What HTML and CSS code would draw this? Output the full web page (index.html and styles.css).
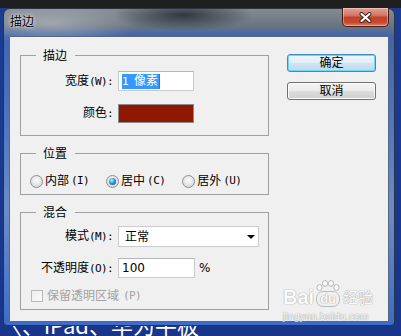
FILE: index.html
```html
<!DOCTYPE html>
<html lang="zh-CN">
<head>
  <meta charset="UTF-8">
  <title>描边</title>
  <link rel="stylesheet" href="styles.css">
</head>
<body>
  <div class="window">
    <div class="titlebar">
      <span class="title">描边</span>
      <button class="close" aria-label="关闭">
        <svg width="13" height="11" viewBox="0 0 13 11">
          <path d="M2.5 2 L10.5 9 M10.5 2 L2.5 9" stroke="#3b1812" stroke-width="4" stroke-linecap="round"/>
          <path d="M2.5 2 L10.5 9 M10.5 2 L2.5 9" stroke="#fff" stroke-width="2.2" stroke-linecap="round"/>
        </svg>
      </button>
    </div>

    <div class="client">
      <div class="groups">
        <fieldset class="group group-stroke">
          <legend>描边</legend>
          <div class="fields">
            <label class="label">宽度<span class="en">(W):</span></label>
            <span class="field"><span class="sel"><span class="en">1 </span>像素</span></span>
            <label class="label">颜色<span class="en">:</span></label>
            <span class="swatch"></span>
          </div>
        </fieldset>

        <fieldset class="group group-position">
          <legend>位置</legend>
          <div class="radios">
            <span class="radio"><span class="radio-dot"></span>内部<span class="en">(I)</span></span>
            <span class="radio checked"><span class="radio-dot"></span>居中<span class="en">(C)</span></span>
            <span class="radio"><span class="radio-dot"></span>居外<span class="en">(U)</span></span>
          </div>
        </fieldset>

        <fieldset class="group group-blend">
          <legend>混合</legend>
          <div class="fields fields-blend">
            <label class="label">模式<span class="en">(M):</span></label>
            <span class="select"><span class="select-value">正常</span><span class="select-arrow"></span></span>
            <label class="label">不透明度<span class="en">(O):</span></label>
            <span class="with-unit"><span class="field field-short"><span class="num">100</span></span><span class="num">%</span></span>
          </div>
          <div class="check disabled"><span class="check-box"></span>保留透明区域<span class="en">(P)</span></div>
        </fieldset>
      </div>

      <div class="actions">
        <button class="btn btn-default">确定</button>
        <button class="btn">取消</button>
      </div>
    </div>
  </div>

  <div class="backdrop"><span>〈、iPad、华为平板</span></div>

  <div class="watermark">
    <div class="wm-logo">
      <span class="wm-bai">Bai</span>
      <span class="paw">
        <svg width="24" height="11" viewBox="0 0 24 11">
          <ellipse cx="3.5" cy="7.5" rx="2.6" ry="3" fill="#fff" stroke="#aaa"/>
          <ellipse cx="9" cy="3.5" rx="2.6" ry="3" fill="#fff" stroke="#aaa"/>
          <ellipse cx="15" cy="3.5" rx="2.6" ry="3" fill="#fff" stroke="#aaa"/>
          <ellipse cx="20.5" cy="7.5" rx="2.6" ry="3" fill="#fff" stroke="#aaa"/>
        </svg>
        <span class="du">du</span>
      </span>
      <span class="wm-cn">经验</span>
    </div>
    <div class="wm-url">jingyan.baidu.com</div>
  </div>
</body>
</html>
```

FILE: styles.css
```css
* {
  box-sizing: border-box;
}

body {
  margin: 0;
  width: 401px;
  height: 336px;
  overflow: hidden;
  position: relative;
  padding-top: 8px;
  background: linear-gradient(to bottom, #1f1f1f 0, #1f1f1f 8px, #1b3c92 8px, #18358a 100%);
  font-family: "Liberation Sans", "Noto Sans CJK SC", sans-serif;
  font-size: 12px;
  color: #000;
}

/* half-width latin, like the dialog's bitmap font */
.en {
  font-family: "DejaVu Sans Mono", monospace;
  font-size: 11px;
  letter-spacing: -0.6px;
}

.num {
  font-family: "DejaVu Sans", sans-serif;
  font-size: 12px;
}

/* window frame */
.window {
  margin-left: 3px;
  width: 392px;
  height: 318px;
  border: 1px solid #2b3442;
  border-radius: 7px 7px 4px 4px;
  padding: 0 5px 3px;
  background:
    radial-gradient(ellipse 70px 16px at 46% 6px, rgba(25, 30, 38, .75), rgba(25, 30, 38, 0)),
    radial-gradient(ellipse 90px 22px at 12% 14px, rgba(200, 205, 210, .55), rgba(200, 205, 210, 0)),
    linear-gradient(to bottom, #838b93 0, #6d767f 16px, #3f65ae 27px, #5077c0 120px, #6d8cc6 200px, #3d6cc8 100%);
}

.titlebar {
  display: flex;
  height: 27px;
}

.title {
  padding: 4px 0 0 1px;
  line-height: 16px;
  font-family: "Noto Sans CJK SC", sans-serif;
  text-shadow: 0 0 5px rgba(255, 255, 255, .9), 0 0 2px rgba(255, 255, 255, .8);
}

.close {
  margin-left: auto;
  margin-top: -1px;
  width: 47px;
  height: 19px;
  padding: 0;
  display: flex;
  align-items: center;
  justify-content: center;
  border: 1px solid #4a1c18;
  border-top: none;
  border-radius: 0 0 5px 5px;
  background: linear-gradient(to bottom, #e3a191 0, #d27a69 40%, #c2412a 52%, #c54a32 80%, #dd835f 100%);
  box-shadow: inset 0 0 0 1px rgba(255, 255, 255, .35);
}

/* dialog body */
.client {
  display: flex;
  gap: 18px;
  height: 286px;
  padding: 10px 0 0 10px;
  background: #f0f0f0;
  border: 1px solid #59687d;
}

.groups {
  width: 249px;
  display: flex;
  flex-direction: column;
  gap: 9px;
}

.group {
  margin: 0;
  min-width: 0;
  padding: 8px 0 12px;
  border: 1px solid #a0a0a0;
}

.group legend {
  margin-left: 15px;
  padding: 0 8px 0 7px;
  line-height: 16px;
  font-family: "Noto Sans CJK SC", sans-serif;
}

.group-position {
  padding: 10px 0 3px;
}

.group-blend {
  padding: 6px 0 6px;
}

.fields {
  display: grid;
  grid-template-columns: 92px auto;
  column-gap: 5px;
  row-gap: 13px;
  align-items: center;
  justify-items: start;
}

.fields-blend {
  row-gap: 11px;
}

.label {
  justify-self: end;
  line-height: 16px;
}

.field {
  display: flex;
  align-items: center;
  width: 76px;
  height: 20px;
  padding: 0 0 0 3px;
  background: #fff;
  border: 1px solid #c9cbcf;
  border-top-color: #b4b6bb;
}

.field-short {
  width: 77px;
}

.sel {
  background: #3399ff;
  color: #fff;
  line-height: 15px;
  padding-right: 1px;
  border-right: 1px solid #c05020;
}

.swatch {
  width: 76px;
  height: 19px;
  background: #8f1900;
  border: 1px solid #8c8c8c;
}

.radios {
  display: flex;
  align-items: center;
  gap: 17px;
  height: 20px;
  padding-left: 9px;
}

.radio {
  display: flex;
  align-items: center;
  gap: 2px;
  line-height: 16px;
}

.radio-dot {
  display: flex;
  align-items: center;
  justify-content: center;
  width: 13px;
  height: 13px;
  border-radius: 50%;
  border: 1px solid #8d8f90;
  background: radial-gradient(circle at 50% 40%, #fdfdfd 0, #e4e4e4 55%, #c9c9c9 100%);
}

.radio.checked .radio-dot::after {
  content: "";
  width: 7px;
  height: 7px;
  border-radius: 50%;
  background: radial-gradient(circle at 40% 35%, #c4f2ff 0, #2b9bd8 45%, #0b3f72 100%);
}

.select {
  display: flex;
  align-items: center;
  width: 141px;
  height: 21px;
  padding: 0 3px 0 6px;
  background: #fff;
  border: 1px solid #c9cbcf;
}

.select-value {
  flex: 1;
  line-height: 16px;
}

.select-arrow {
  width: 0;
  height: 0;
  border-left: 4px solid transparent;
  border-right: 4px solid transparent;
  border-top: 4px solid #000;
}

.with-unit {
  display: flex;
  align-items: center;
  gap: 4px;
}

.check {
  display: flex;
  align-items: center;
  gap: 4px;
  height: 15px;
  margin-top: 10px;
  padding-left: 10px;
  line-height: 16px;
}

.check.disabled {
  color: #a2a2a2;
}

.check-box {
  width: 12px;
  height: 12px;
  border: 1px solid #b9b9b9;
  background: linear-gradient(135deg, #ececec, #fbfbfb);
}

/* buttons */
.actions {
  display: flex;
  flex-direction: column;
  gap: 10px;
  padding-top: 7px;
}

.btn {
  width: 89px;
  height: 18px;
  padding: 0;
  font-family: "Liberation Sans", "Noto Sans CJK SC", sans-serif;
  font-size: 12px;
  line-height: 16px;
  color: #000;
  border: 1px solid #707070;
  border-radius: 3px;
  background: linear-gradient(to bottom, #f3f3f3 0, #ebebeb 50%, #dddddd 51%, #cfcfcf 100%);
  box-shadow: inset 0 0 0 1px #fbfbfb;
}

.btn-default {
  border-color: #3c8dc4;
  background: linear-gradient(to bottom, #eef6fb 0, #e1eef7 50%, #cfe4f1 51%, #bfdaec 100%);
  box-shadow: inset 0 0 0 1px #6fd4f7;
}

/* desktop behind the dialog */
.backdrop {
  height: 10px;
  overflow: hidden;
  color: #fff;
}

.backdrop span {
  display: block;
  margin-top: -14px;
  font-family: "Noto Sans CJK SC", sans-serif;
  font-size: 22px;
  line-height: 24px;
  white-space: nowrap;
}

/* image watermark */
.watermark {
  position: absolute;
  left: 283px;
  top: 280px;
  color: #fff;
  opacity: .8;
  text-shadow: 0 0 1px #8a8a8a, 0 0 1px #8a8a8a;
}

.wm-logo {
  display: flex;
  align-items: flex-end;
  gap: 1px;
}

.wm-bai {
  font-size: 20px;
  font-weight: bold;
  line-height: 20px;
}

.paw {
  display: flex;
  flex-direction: column;
  align-items: center;
  width: 26px;
}

.du {
  font-size: 13px;
  font-weight: bold;
  line-height: 14px;
  padding: 0 3px;
  border: 1px solid #b0b0b0;
  border-radius: 7px;
}

.wm-cn {
  font-family: "Noto Sans CJK SC", sans-serif;
  font-size: 15px;
  line-height: 20px;
  margin-left: 1px;
}

.wm-url {
  margin-top: 5px;
  font-size: 10px;
  line-height: 10px;
  letter-spacing: .3px;
}
```
